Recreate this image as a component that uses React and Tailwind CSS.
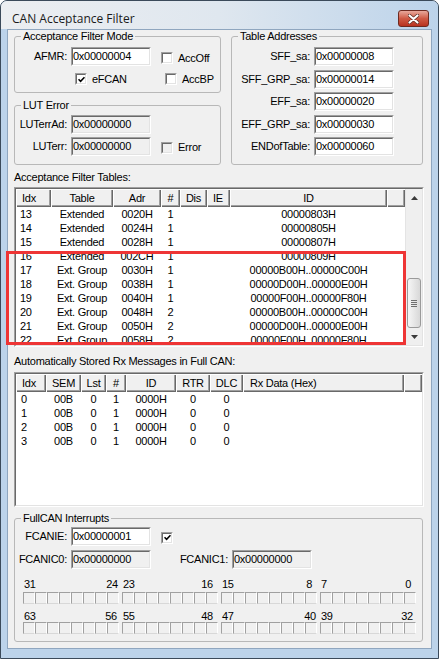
import React from 'react';

const sunken = 'border border-t-[#a0a0a0] border-l-[#a0a0a0] border-r-white border-b-white';
const sunkenInner = 'border border-t-[#696969] border-l-[#696969] border-r-[#e3e3e3] border-b-[#e3e3e3]';
const raised = 'bg-[#f0f0f0] shadow-[inset_1px_1px_0_#fff,inset_-1px_-1px_0_#696969,inset_-2px_-2px_0_#a0a0a0]';

function Edit({ value, disabled }) {
  return (
    <div className={`${sunken} w-[80px] h-[19px] shrink-0`}>
      <div className={`${sunkenInner} h-full flex items-center ${disabled ? 'bg-[#f0f0f0]' : 'bg-white'}`}>
        <span className="leading-[13px]">{value}</span>
      </div>
    </div>
  );
}

function Check({ checked, disabled }) {
  return (
    <div className={`${sunken} w-[12px] h-[12px] shrink-0`}>
      <div className={`${sunkenInner} w-full h-full flex items-center justify-center ${disabled ? 'bg-[#f0f0f0]' : 'bg-white'}`}>
        {checked && (
          <svg width="7" height="7" viewBox="0 0 7 7">
            <path d="M0.5 3.2 L2.6 5.3 L6.5 1.2" stroke="#000" strokeWidth="1.6" fill="none" />
          </svg>
        )}
      </div>
    </div>
  );
}

function Group({ title, className = '', children }) {
  return (
    <fieldset className={`border border-[#b8b8b8] rounded-[3px] ${className}`}>
      <legend className="ml-[6px] px-[2px] leading-[13px]">{title}</legend>
      {children}
    </fieldset>
  );
}

function Label({ children, w = 'w-[56px]' }) {
  return <span className={`${w} shrink-0 text-right pr-[4px] leading-[13px]`}>{children}</span>;
}

const cols1 = [
  { w: 'w-[35px]', h: 'Idx', hc: 'justify-start pl-[6px]', rc: 'justify-start pl-[4px]' },
  { w: 'w-[62px]', h: 'Table', hc: 'justify-center', rc: 'justify-center' },
  { w: 'w-[48px]', h: 'Adr', hc: 'justify-center', rc: 'justify-center' },
  { w: 'w-[19px]', h: '#', hc: 'justify-center', rc: 'justify-center' },
  { w: 'w-[27px]', h: 'Dis', hc: 'justify-center', rc: 'justify-center' },
  { w: 'w-[23px]', h: 'IE', hc: 'justify-start pl-[6px]', rc: 'justify-center' },
  { w: 'w-[157px]', h: 'ID', hc: 'justify-center', rc: 'justify-center' },
];

const rows1 = [
  ['13', 'Extended', '0020H', '1', '', '', '00000803H'],
  ['14', 'Extended', '0024H', '1', '', '', '00000805H'],
  ['15', 'Extended', '0028H', '1', '', '', '00000807H'],
  ['16', 'Extended', '002CH', '1', '', '', '00000809H'],
  ['17', 'Ext. Group', '0030H', '1', '', '', '00000B00H..00000C00H'],
  ['18', 'Ext. Group', '0038H', '1', '', '', '00000D00H..00000E00H'],
  ['19', 'Ext. Group', '0040H', '1', '', '', '00000F00H..00000F80H'],
  ['20', 'Ext. Group', '0048H', '2', '', '', '00000B00H..00000C00H'],
  ['21', 'Ext. Group', '0050H', '2', '', '', '00000D00H..00000E00H'],
  ['22', 'Ext. Group', '0058H', '2', '', '', '00000F00H..00000F80H'],
];

const cols2 = [
  { w: 'w-[30px]', h: 'Idx', hc: 'justify-start pl-[6px]', rc: 'justify-start pl-[5px]' },
  { w: 'w-[35px]', h: 'SEM', hc: 'justify-center', rc: 'justify-center' },
  { w: 'w-[25px]', h: 'Lst', hc: 'justify-center', rc: 'justify-center' },
  { w: 'w-[20px]', h: '#', hc: 'justify-center', rc: 'justify-center' },
  { w: 'w-[50px]', h: 'ID', hc: 'justify-center', rc: 'justify-center' },
  { w: 'w-[34px]', h: 'RTR', hc: 'justify-center', rc: 'justify-center' },
  { w: 'w-[33px]', h: 'DLC', hc: 'justify-center', rc: 'justify-center' },
  { w: 'w-[161px]', h: 'Rx Data (Hex)', hc: 'justify-start pl-[7px]', rc: 'justify-start pl-[7px]' },
];

const rows2 = [
  ['0', '00B', '0', '1', '0000H', '0', '0', ''],
  ['1', '00B', '0', '1', '0000H', '0', '0', ''],
  ['2', '00B', '0', '1', '0000H', '0', '0', ''],
  ['3', '00B', '0', '1', '0000H', '0', '0', ''],
];

function Header({ cols }) {
  return (
    <div className="flex h-[18px] shrink-0">
      {cols.map((c) => (
        <div key={c.h} className={`${c.w} ${c.hc} ${raised} shrink-0 flex items-center leading-[13px]`}>
          {c.h}
        </div>
      ))}
      <div className={`flex-1 ${raised}`} />
    </div>
  );
}

function Rows({ cols, rows }) {
  return (
    <div className="flex-1 overflow-hidden bg-white">
      {rows.map((r, i) => (
        <div key={i} className="flex h-[14px]">
          {cols.map((c, j) => (
            <div key={j} className={`${c.w} ${c.rc} shrink-0 flex items-center leading-[13px] whitespace-nowrap`}>
              {r[j]}
            </div>
          ))}
        </div>
      ))}
    </div>
  );
}

function ScrollBar() {
  return (
    <div className="w-[17px] shrink-0 flex flex-col bg-[#efefef] border-l border-[#e4e4e4]">
      <div className="h-[17px] flex items-center justify-center">
        <svg width="7" height="4" viewBox="0 0 7 4"><path d="M0 4 L3.5 0 L7 4 Z" fill="#3a3a3a" /></svg>
      </div>
      <div className="h-[72px]" />
      <div className="h-[50px] mx-[1px] rounded-[3px] border border-[#9a9a9a] bg-gradient-to-r from-[#f6f6f6] to-[#d8d8d8] flex flex-col items-center justify-center gap-[1px]">
        <div className="w-[6px] h-[1px] bg-[#6f6f6f]" />
        <div className="w-[6px] h-[1px] bg-[#6f6f6f]" />
        <div className="w-[6px] h-[1px] bg-[#6f6f6f]" />
        <div className="w-[6px] h-[1px] bg-[#6f6f6f]" />
      </div>
      <div className="flex-1" />
      <div className="h-[17px] flex items-center justify-center">
        <svg width="7" height="4" viewBox="0 0 7 4"><path d="M0 0 L7 0 L3.5 4 Z" fill="#3a3a3a" /></svg>
      </div>
    </div>
  );
}

const bitRows = [
  [['31', '24', 'pr-[1px]'], ['23', '16', 'pr-[5px]'], ['15', '8', 'pr-[5px]'], ['7', '0', 'pr-[5px]']],
  [['63', '56', 'pr-[2px]'], ['55', '48', 'pr-[5px]'], ['47', '40', 'pr-[1px]'], ['39', '32', 'pr-[3px]']],
];

function BitBoxes() {
  return (
    <div className="flex gap-[3px]">
      {[0, 1, 2, 3].map((g) => (
        <div key={g} className="flex w-[96px]">
          {[0, 1, 2, 3, 4, 5, 6, 7].map((b) => (
            <div key={b} className="w-[12px] h-[12px] border border-t-[#a0a0a0] border-l-[#a0a0a0] border-r-[#ffffff] border-b-[#d8d8d8] bg-[#f0f0f0]" />
          ))}
        </div>
      ))}
    </div>
  );
}

function BitLabels({ row }) {
  return (
    <div className="flex gap-[3px] h-[12px]">
      {row.map(([l, r, pr]) => (
        <div key={l} className={`w-[96px] flex justify-between pl-[1px] ${pr} leading-[12px]`}>
          <span>{l}</span>
          <span>{r}</span>
        </div>
      ))}
    </div>
  );
}

export default function App() {
  return (
    <div className="relative w-[439px] h-[659px] overflow-hidden flex flex-col border border-[#3b4a5a] rounded-t-[7px] bg-[#bcd3ea] font-['Liberation_Sans',Arial,sans-serif] text-[11px] tracking-[-0.25px] text-black">
      {/* title bar */}
      <div className="h-[28px] shrink-0 flex items-start justify-between pl-[11px] pr-[9px] bg-gradient-to-r from-[#eceef1] via-[#dfe7ef] to-[#bcd3ea]">
        <span className="mt-[10px] leading-[15px] text-[12px] tracking-normal font-['Open_Sans',sans-serif] text-[#1a1a1a]">CAN Acceptance Filter</span>
        <div className="mt-[9px] w-[31px] h-[17px] rounded-[3px] border border-[#6e2a20] bg-gradient-to-b from-[#e7a89c] via-[#cf5a45] to-[#b8321f] flex items-center justify-center">
          <svg width="11" height="10" viewBox="0 0 11 10">
            <path d="M1.5 1.5 L9.5 8.5 M9.5 1.5 L1.5 8.5" stroke="#5a2a22" strokeWidth="3.6" strokeLinecap="round" />
            <path d="M1.5 1.5 L9.5 8.5 M9.5 1.5 L1.5 8.5" stroke="#fff" strokeWidth="2.2" strokeLinecap="round" />
          </svg>
        </div>
      </div>

      {/* client area */}
      <div className="flex-1 mx-[6px] mb-[9px] border border-[#8fa6bf] bg-[#f0f0f0] pl-[6px] flex flex-col">
        <div className="flex items-start gap-[10px]">
          <div className="w-[207px] flex flex-col">
            <Group title="Acceptance Filter Mode" className="pb-[4px]">
              <div className="mt-[4px] flex items-center h-[19px]">
                <Label>AFMR:</Label>
                <Edit value="0x00000004" />
                <div className="ml-[10px] mt-[3px] flex items-center gap-[5px]">
                  <Check />
                  <span className="leading-[13px]">AccOff</span>
                </div>
              </div>
              <div className="mt-[4px] flex items-center h-[18px]">
                <div className="w-[60px] shrink-0" />
                <Check checked />
                <span className="ml-[5px] w-[73px] leading-[13px]">eFCAN</span>
                <Check />
                <span className="ml-[5px] leading-[13px]">AccBP</span>
              </div>
            </Group>
            <Group title="LUT Error" className="mt-[6px] pb-[8px]">
              <div className="mt-[3px] flex items-center h-[19px]">
                <Label>LUTerrAd:</Label>
                <Edit value="0x00000000" disabled />
              </div>
              <div className="mt-[3px] flex items-center h-[19px]">
                <Label>LUTerr:</Label>
                <Edit value="0x00000000" disabled />
                <div className="ml-[10px] mt-[2px] flex items-center gap-[5px]">
                  <Check disabled />
                  <span className="leading-[13px]">Error</span>
                </div>
              </div>
            </Group>
          </div>
          <Group title="Table Addresses" className="w-[192px] pb-[8px]">
            <div className="mt-[4px] flex flex-col gap-[3.5px]">
              {[
                ['SFF_sa:', '0x00000008'],
                ['SFF_GRP_sa:', '0x00000014'],
                ['EFF_sa:', '0x00000020'],
                ['EFF_GRP_sa:', '0x00000030'],
                ['ENDofTable:', '0x00000060'],
              ].map(([l, v]) => (
                <div key={l} className="flex items-center h-[19px]">
                  <Label w="w-[82px]">{l}</Label>
                  <Edit value={v} />
                </div>
              ))}
            </div>
          </Group>
        </div>

        <div className="mt-[6px] h-[13px] leading-[13px]">Acceptance Filter Tables:</div>
        <div className={`${sunken} mt-[3px] w-[410px] h-[160px] shrink-0`}>
          <div className={`${sunkenInner} h-full flex bg-white`}>
            <div className="flex-1 flex flex-col min-w-0">
              <Header cols={cols1} />
              <Rows cols={cols1} rows={rows1} />
            </div>
            <ScrollBar />
          </div>
        </div>

        <div className="mt-[8px] h-[13px] leading-[13px]">Automatically Stored Rx Messages in Full CAN:</div>
        <div className={`${sunken} mt-[4px] w-[410px] h-[135px] shrink-0`}>
          <div className={`${sunkenInner} h-full flex flex-col bg-white`}>
            <Header cols={cols2} />
            <Rows cols={cols2} rows={rows2} />
          </div>
        </div>

        <Group title="FullCAN Interrupts" className="mt-[5px] w-[409px] pb-[7px]">
          <div className="mt-[2px] flex items-center h-[19px]">
            <Label>FCANIE:</Label>
            <Edit value="0x00000001" />
            <div className="ml-[10px] mt-[2px]">
              <Check checked />
            </div>
          </div>
          <div className="mt-[4px] flex items-center h-[19px]">
            <Label>FCANIC0:</Label>
            <Edit value="0x00000000" disabled />
            <Label w="w-[81px]">FCANIC1:</Label>
            <Edit value="0x00000000" disabled />
          </div>
          <div className="pl-[8px]">
            <div className="mt-[9px]"><BitLabels row={bitRows[0]} /></div>
            <div className="mt-[2px]"><BitBoxes /></div>
            <div className="mt-[6px]"><BitLabels row={bitRows[1]} /></div>
            <BitBoxes />
          </div>
        </Group>
      </div>

      {/* red highlight annotation */}
      <div className="absolute left-[5px] top-[250px] w-[400px] h-[94px] border-[3px] border-[#ee3535] pointer-events-none" />
    </div>
  );
}
